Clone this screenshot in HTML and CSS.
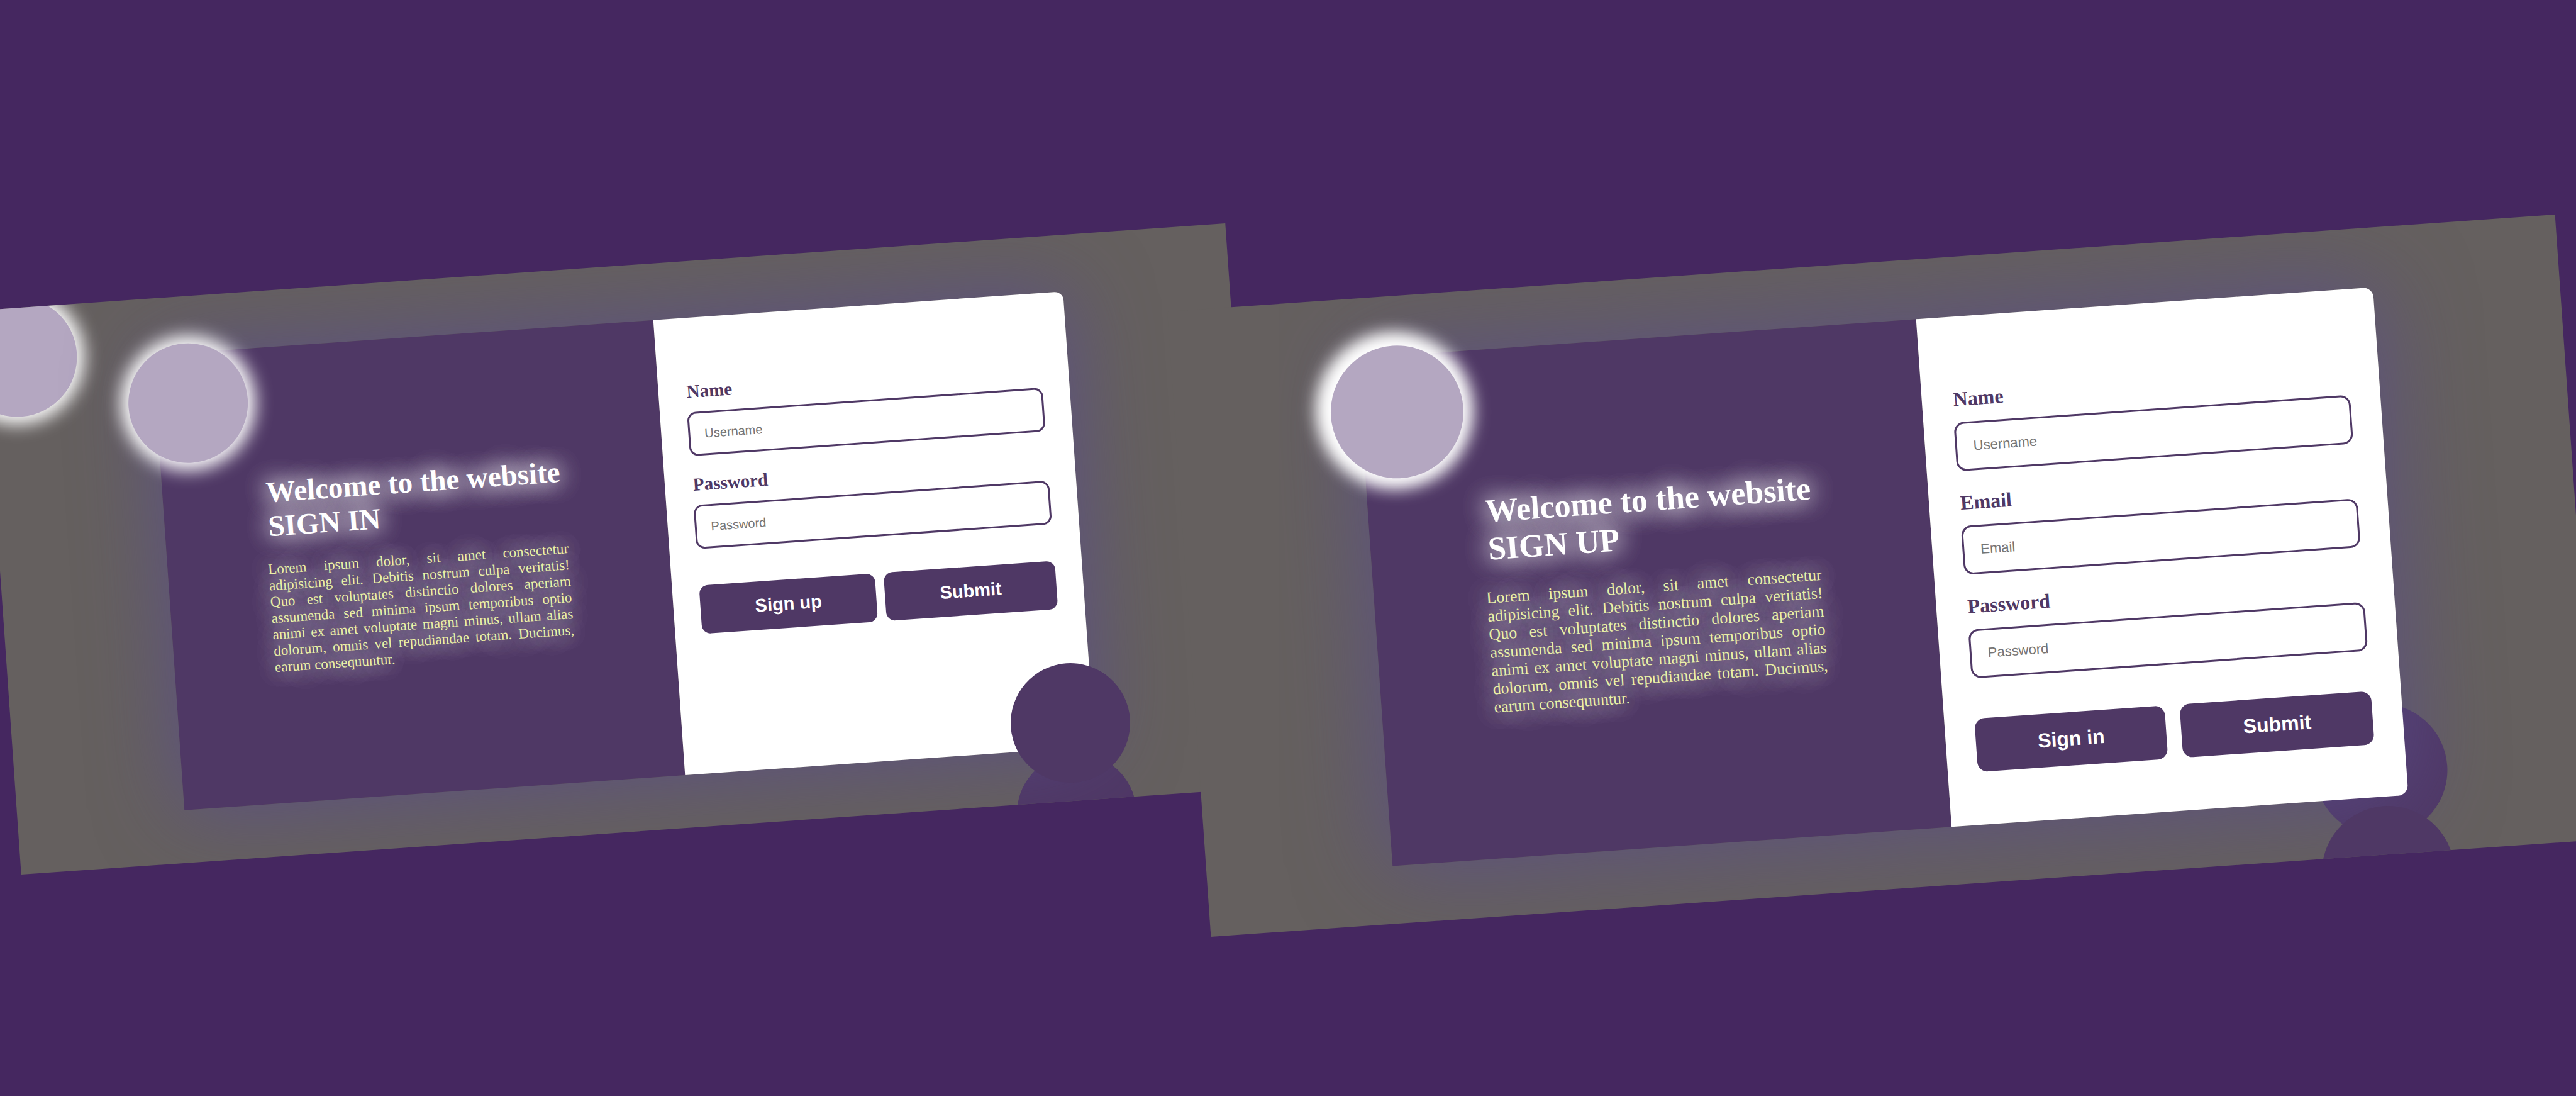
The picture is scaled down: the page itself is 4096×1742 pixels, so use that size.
FILE: index.html
```html
<!DOCTYPE html>
<html lang="en">
<head>
<meta charset="utf-8">
<meta name="viewport" content="width=device-width, initial-scale=1">
<title>Sign in / Sign up</title>
<link rel="stylesheet" href="styles.css">
</head>
<body>
<main class="stage">
  <section class="scene scene-signin">
    <span class="orb orb-light orb-corner"></span>
    <span class="orb orb-dark orb-low"></span>
    <div class="card">
      <div class="intro">
        <h1 class="title">Welcome to the website<br>SIGN IN</h1>
        <p class="text">Lorem ipsum dolor, sit amet consectetur adipisicing&nbsp;elit. Debitis nostrum culpa veritatis! Quo est voluptates distinctio dolores aperiam assumenda sed minima ipsum temporibus optio animi ex amet voluptate magni minus, ullam alias dolorum, omnis vel repudiandae totam. Ducimus, earum consequuntur.</p>
      </div>
      <form class="form">
        <label class="label" for="in-name">Name</label>
        <input class="field" id="in-name" type="text" placeholder="Username">
        <label class="label" for="in-password">Password</label>
        <input class="field" id="in-password" type="password" placeholder="Password">
        <div class="actions">
          <button class="button" type="button">Sign up</button>
          <button class="button" type="submit">Submit</button>
        </div>
      </form>
    </div>
    <span class="orb orb-light orb-main"></span>
    <span class="orb orb-dark orb-high"></span>
  </section>

  <section class="scene scene-signup">
    <span class="orb orb-dark orb-high"></span>
    <div class="card">
      <div class="intro">
        <h1 class="title">Welcome to the website<br>SIGN UP</h1>
        <p class="text">Lorem ipsum dolor, sit amet consectetur adipisicing&nbsp;elit. Debitis nostrum culpa veritatis! Quo est voluptates distinctio dolores aperiam assumenda sed minima ipsum temporibus optio animi ex amet voluptate magni minus, ullam alias dolorum, omnis vel repudiandae totam. Ducimus, earum consequuntur.</p>
      </div>
      <form class="form">
        <label class="label" for="up-name">Name</label>
        <input class="field" id="up-name" type="text" placeholder="Username">
        <label class="label" for="up-email">Email</label>
        <input class="field" id="up-email" type="email" placeholder="Email">
        <label class="label" for="up-password">Password</label>
        <input class="field" id="up-password" type="password" placeholder="Password">
        <div class="actions">
          <button class="button" type="button">Sign in</button>
          <button class="button" type="submit">Submit</button>
        </div>
      </form>
    </div>
    <span class="orb orb-light orb-main"></span>
    <span class="orb orb-dark orb-low"></span>
  </section>
</main>
</body>
</html>
```
FILE: styles.css
```css
* {
  box-sizing: border-box;
}

body {
  margin: 0;
  background: #452760;
  font-family: "Liberation Serif", "Times New Roman", serif;
  overflow: hidden;
}

.stage {
  display: flex;
  align-items: flex-start;
  min-height: 100vh;
  padding-top: 417px;
}

.scene {
  position: relative;
  flex: none;
  overflow: hidden;
  background: #65605f;
  transform: rotate(-4deg);
}

.scene-signin {
  --title: 47px;
  --title-line: 54px;
  --text: 23px;
  --text-line: 26px;
  --title-gap: 29px;
  --label: 29px;
  --label-line: 33px;
  --label-gap: 16px;
  --field: 70px;
  --field-text: 20px;
  --field-pad: 23px;
  --gap: 29px;
  --button: 77px;
  --button-gap: 14px;
  --form-top: 101px;
  --form-side: 43px;
  --radius: 14px;
  --orb: 190px;
  --glow: 0 0 28px 12px #fff;
  --blur: 130px;
  --halo: 38px;
  --card: 725px;
  width: 48.4%;
  margin-top: 6px;
  padding: 90px 0 84px;
}

.scene-signup {
  --title: 52px;
  --title-line: 60px;
  --text: 26px;
  --text-line: 29px;
  --title-gap: 33px;
  --label: 32px;
  --label-line: 37px;
  --label-gap: 18px;
  --field: 78px;
  --field-text: 22px;
  --field-pad: 26px;
  --gap: 32px;
  --button: 85px;
  --button-gap: 24px;
  --form-top: 113px;
  --form-side: 48px;
  --radius: 16px;
  --orb: 211px;
  --glow: 0 0 30px 12px #fff, -8px -5px 30px 12px #fff;
  --blur: 145px;
  --halo: 42px;
  --card: 809px;
  width: 54%;
  margin-left: -2.3%;
  padding: 95px 0 92px;
}

.card {
  position: relative;
  display: grid;
  grid-template-columns: 55fr 45fr;
  width: 73.2%;
  min-height: var(--card);
  margin: 0 auto;
  border-radius: 0 var(--radius) var(--radius) 0;
  box-shadow: 0 0 var(--blur) rgba(90, 76, 138, 0.85);
}

.intro {
  display: flex;
  flex-direction: column;
  justify-content: center;
  gap: var(--title-gap);
  padding: 0 20%;
  background: #4f3865;
}

.title,
.text {
  margin: 0;
  text-shadow: 0 0 var(--halo) #fff, 0 0 var(--halo) #fff;
}

.title {
  align-self: center;
  color: #fff;
  font-size: var(--title);
  line-height: var(--title-line);
  white-space: nowrap;
}

.text {
  color: #e9f0a5;
  font-size: var(--text);
  line-height: var(--text-line);
  text-align: justify;
}

.form {
  display: flex;
  flex-direction: column;
  padding: var(--form-top) var(--form-side) 0;
  background: #fff;
  border-radius: 0 var(--radius) var(--radius) 0;
}

.label {
  margin: 0 0 var(--label-gap) 2px;
  color: #4f3865;
  font-size: var(--label);
  font-weight: bold;
  line-height: var(--label-line);
}

.field {
  width: 100%;
  height: var(--field);
  margin: 0 0 var(--gap);
  padding: 0 var(--field-pad);
  border: 3px solid #4f3865;
  border-radius: var(--radius);
  background: #fff;
  font: var(--field-text) "Liberation Sans", Arial, sans-serif;
}

.field::placeholder {
  color: #757575;
}

.actions {
  display: flex;
  gap: var(--button-gap);
  margin-top: var(--gap);
}

.button {
  flex: 1 1 auto;
  height: var(--button);
  padding: 0;
  border: 0;
  border-radius: var(--radius);
  background: #4f3865;
  color: #fff;
  font: bold var(--label) "Liberation Sans", Arial, sans-serif;
}

.orb {
  position: absolute;
  width: var(--orb);
  height: var(--orb);
  border-radius: 50%;
}

.orb-light {
  background: #b4a7c1;
  box-shadow: var(--glow);
}

.orb-dark {
  background: #4f3865;
}

.orb-corner {
  left: -44px;
  top: -17px;
}

.scene-signin .orb-main {
  left: 11.2%;
  top: 75px;
}

.scene-signup .orb-main {
  left: 11.2%;
  top: 79px;
}

.orb-high,
.orb-low {
  left: 80%;
}

.scene-signin .orb-high {
  top: 680px;
}

.scene-signin .orb-low {
  top: 824px;
}

.scene-signup .orb-high {
  top: 756px;
}

.scene-signup .orb-low {
  top: 919px;
}
```
